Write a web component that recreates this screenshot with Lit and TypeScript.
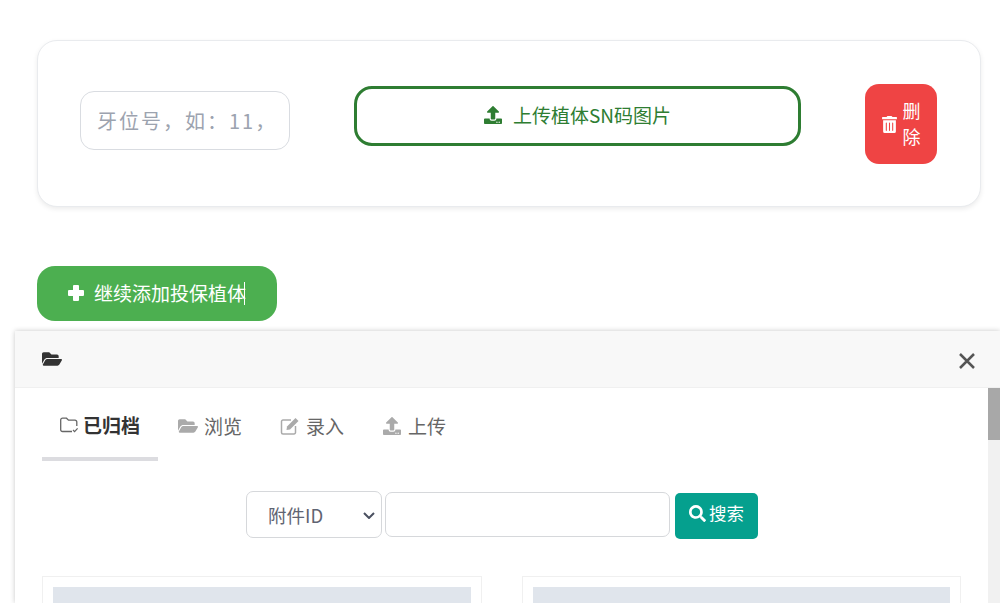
import { LitElement, html, css, svg } from "lit";
import { customElement } from "lit/decorators.js";

const icon = (cls: string, vb: string, d: string) =>
  html`<svg class=${cls} viewBox=${vb} fill="currentColor" aria-hidden="true">${svg`<path d=${d}></path>`}</svg>`;

const UPLOAD = "M296 384h-80c-13.3 0-24-10.7-24-24V192h-87.7c-17.8 0-26.7-21.5-14.1-34.1L242.3 5.7c7.5-7.5 19.8-7.5 27.3 0l152.2 152.2c12.6 12.6 3.7 34.1-14.1 34.1H320v168c0 13.3-10.7 24-24 24zm216-8v112c0 13.3-10.7 24-24 24H24c-13.3 0-24-10.7-24-24V376c0-13.3 10.7-24 24-24h136v8c0 30.9 25.1 56 56 56h80c30.9 0 56-25.1 56-56v-8h136c13.3 0 24 10.7 24 24zm-124 88c0-11-9-20-20-20s-20 9-20 20 9 20 20 20 20-9 20-20zm64 0c0-11-9-20-20-20s-20 9-20 20 9 20 20 20 20-9 20-20z";
const PLUS = "M6 0h4a1 1 0 0 1 1 1v4h4a1 1 0 0 1 1 1v4a1 1 0 0 1-1 1h-4v4a1 1 0 0 1-1 1H6a1 1 0 0 1-1-1v-4H1a1 1 0 0 1-1-1V6a1 1 0 0 1 1-1h4V1a1 1 0 0 1 1-1z";
const TRASH = "M32 464a48 48 0 0 0 48 48h288a48 48 0 0 0 48-48V128H32zm272-256a16 16 0 0 1 32 0v224a16 16 0 0 1-32 0zm-96 0a16 16 0 0 1 32 0v224a16 16 0 0 1-32 0zm-96 0a16 16 0 0 1 32 0v224a16 16 0 0 1-32 0zM432 32H312l-9.4-18.7A24 24 0 0 0 281.1 0H166.8a23.72 23.72 0 0 0-21.4 13.3L136 32H16A16 16 0 0 0 0 48v32a16 16 0 0 0 16 16h416a16 16 0 0 0 16-16V48a16 16 0 0 0-16-16z";
const FOLDER_OPEN = "M572.694 292.093L500.27 416.248A63.997 63.997 0 0 1 444.989 448H45.025c-18.523 0-30.064-20.093-20.731-36.093l72.424-124.155A64 64 0 0 1 152 256h399.964c18.523 0 30.064 20.093 20.73 36.093zM152 224h328v-48c0-26.51-21.49-48-48-48H272l-64-64H48C21.49 64 0 85.49 0 112v278.046l69.077-118.418C86.214 242.25 117.989 224 152 224z";
const SEARCH = "M505 442.7L405.3 343c-4.5-4.5-10.6-7-17-7H372c27.6-35.3 44-79.7 44-128C416 93.1 322.9 0 208 0S0 93.1 0 208s93.1 208 208 208c48.3 0 92.7-16.4 128-44v16.3c0 6.4 2.5 12.5 7 17l99.7 99.7c9.4 9.4 24.6 9.4 33.9 0l28.3-28.3c9.4-9.4 9.4-24.6.1-34zM208 336c-70.7 0-128-57.2-128-128 0-70.7 57.2-128 128-128 70.7 0 128 57.2 128 128 0 70.7-57.2 128-128 128z";

@customElement("app-root")
export class AppRoot extends LitElement {
  static styles = css`
    :host {
      display: block;
      position: relative;
      height: 603px;
      overflow: hidden;
      background: #fff;
      font-family: "Noto Sans CJK SC", "Liberation Sans", sans-serif;
      box-sizing: border-box;
      padding: 40px 19px 0 37px;
    }
    * { box-sizing: border-box; }
    svg { display: block; flex: none; }

    .card {
      height: 167px;
      border: 1px solid #e9ebee;
      border-radius: 20px;
      box-shadow: 0 2px 5px rgba(0, 0, 0, 0.08);
      background: #fff;
      display: flex;
      align-items: flex-start;
      padding: 43px 42px 0 42px;
    }
    .tooth {
      width: 210px;
      height: 59px;
      margin-top: 7px;
      flex: none;
      border: 1px solid #d9dce1;
      border-radius: 14px;
      padding: 0 16px;
      font: 20px "Noto Sans CJK SC", "Liberation Sans", sans-serif;
      letter-spacing: 2px;
      outline: none;
      background: #fff;
    }
    .tooth::placeholder { color: #9ca3af; opacity: 1; }
    .upload {
      width: 447px;
      height: 60px;
      margin: 2px 64px 0 64px;
      flex: none;
      border: 3px solid #2e7d32;
      border-radius: 18px;
      color: #2e7d32;
      display: flex;
      align-items: center;
      justify-content: center;
      gap: 11px;
      font-size: 19px;
      padding-bottom: 3px;
    }
    .upload-ic { width: 18px; height: 18px; margin-top: 1px; }
    .delete {
      width: 72px;
      height: 80px;
      flex: none;
      background: #ef4444;
      border-radius: 14px;
      color: #fff;
      display: flex;
      align-items: center;
      justify-content: center;
      gap: 6px;
      font-size: 18px;
      line-height: 26px;
      padding-bottom: 2px;
    }
    .del-text { width: 18px; text-align: center; }
    .del-ic { width: 15px; height: 17px; margin-top: 2px; }

    .add {
      width: 240px;
      height: 55px;
      margin-top: 59px;
      background: #4caf50;
      border-radius: 18px;
      color: #fff;
      display: flex;
      align-items: center;
      padding: 0 0 2px 31px;
      gap: 10px;
      font-size: 19px;
    }
    .add-ic { width: 16px; height: 16px; }
    .caret { width: 1px; height: 23px; background: #fff; margin: 2px 0 0 -12px; }

    .modal {
      position: absolute;
      left: 15px;
      top: 331px;
      width: 985px;
      height: 272px;
      background: #fff;
      box-shadow: 0 0 5px rgba(0, 0, 0, 0.22);
      display: flex;
      flex-direction: column;
    }
    .head {
      height: 57px;
      flex: none;
      background: #f8f8f8;
      border-bottom: 1px solid #f0f0f0;
      display: flex;
      align-items: center;
      justify-content: space-between;
      padding: 0 24px 0 27px;
      color: #333;
    }
    .head-ic { width: 20px; height: 18px; }
    .close { width: 18px; height: 18px; color: #555; margin-top: 3px; }

    .body { flex: 1; display: flex; min-height: 0; }
    .content { flex: 1; padding: 0 27px; min-width: 0; }
    .bar { width: 12px; background: #f1f1f1; flex: none; }
    .thumb { height: 52px; background: #a8a8a8; }

    .tabs { display: flex; height: 73px; }
    .tab {
      display: flex;
      align-items: center;
      gap: 6px;
      height: 73px;
      padding: 2px 0 0;
      font-size: 19px;
      color: #666;
      margin-right: 38px;
    }
    .tab svg { width: 20px; height: 18px; color: #aaa; }
    .tab.active {
      width: 116px;
      margin-right: 20px;
      padding: 4px 0 0 17px;
      font-weight: 700;
      color: #333;
      border-bottom: 4px solid #dcdce0;
      gap: 4px;
      flex: none;
    }
    .tab.active svg { width: 20px; height: 18px; color: #666; }

    .search {
      display: flex;
      align-items: center;
      margin: 30px 0 0 204px;
      height: 47px;
    }
    .sel {
      width: 136px;
      height: 47px;
      border: 1px solid #d6d8db;
      border-radius: 7px;
      background: #fff url("data:image/svg+xml,%3Csvg xmlns='http://www.w3.org/2000/svg' viewBox='0 0 12 7'%3E%3Cpath d='M1 1l5 5 5-5' fill='none' stroke='%234a5060' stroke-width='2'/%3E%3C/svg%3E") no-repeat right 6px top 20px / 12px 7px;
      appearance: none;
      color: #5f6472;
      font: 18.5px "Noto Sans CJK SC", "Liberation Sans", sans-serif;
      padding-left: 21px;
      outline: none;
    }
    .q {
      width: 285px;
      height: 45px;
      margin-left: 3px;
      border: 1px solid #d6d8db;
      border-radius: 7px;
      background: #fff;
      outline: none;
    }
    .go {
      width: 83px;
      height: 46px;
      margin: 2px 0 0 5px;
      background: #05a08e;
      border-radius: 5px;
      color: #fff;
      display: flex;
      align-items: center;
      justify-content: center;
      gap: 3px;
      font-size: 17.5px;
      padding-bottom: 7px;
    }
    .go svg { width: 17px; height: 17px; margin-top: 3px; }

    .grid {
      display: grid;
      grid-template-columns: 440px 439px;
      gap: 40px;
      margin-top: 38px;
    }
    .tile { border: 1px solid #f0f0f0; height: 80px; padding: 10px; }
    .thumbimg { height: 60px; background: #e0e5ec; }
  `;

  render() {
    return html`
      <div class="card">
        <input class="tooth" placeholder="牙位号，如：11，12" />
        <div class="upload">${icon("upload-ic", "0 0 512 512", UPLOAD)}<span>上传植体SN码图片</span></div>
        <div class="delete">${icon("del-ic", "0 0 448 512", TRASH)}<span class="del-text">删除</span></div>
      </div>
      <div class="add">
        ${icon("add-ic", "0 0 16 16", PLUS)}<span>继续添加投保植体</span><i class="caret"></i>
      </div>
      <section class="modal">
        <div class="head">
          ${icon("head-ic", "0 0 576 512", FOLDER_OPEN)}
          <svg class="close" viewBox="0 0 18 18" fill="none" stroke="currentColor" stroke-width="2.5" aria-label="关闭">
            <path d="M2 2l14 14M16 2L2 16"></path>
          </svg>
        </div>
        <div class="body">
          <div class="content">
            <div class="tabs">
              <div class="tab active">
                <svg viewBox="0 0 20 18" fill="none" stroke="currentColor" stroke-width="1.3">
                  <path d="M13 15.5H3.5A1.8 1.8 0 0 1 1.7 13.7V4A1.8 1.8 0 0 1 3.5 2.2H7.5L9.5 4.2H16A1.8 1.8 0 0 1 17.8 6V10M14 14l1.6 1.6 3-3.2"></path>
                </svg>
                <span>已归档</span>
              </div>
              <div class="tab">${icon("", "0 0 576 512", FOLDER_OPEN)}<span>浏览</span></div>
              <div class="tab">
                <svg viewBox="0 0 20 18" fill="none" stroke="currentColor" stroke-width="1.5">
                  <path d="M11 3H3a1.5 1.5 0 0 0-1.5 1.5v11A1.5 1.5 0 0 0 3 17h11a1.5 1.5 0 0 0 1.5-1.5V9"></path>
                  <path d="M7 9.5L15.5 1l3 3L10 12.5l-3.5.5z" fill="currentColor" stroke="none"></path>
                </svg>
                <span>录入</span>
              </div>
              <div class="tab">${icon("", "0 0 512 512", UPLOAD)}<span>上传</span></div>
            </div>
            <div class="search">
              <select class="sel"><option>附件ID</option></select>
              <input class="q" />
              <div class="go">${icon("", "0 0 512 512", SEARCH)}<span>搜索</span></div>
            </div>
            <div class="grid">
              <div class="tile"><div class="thumbimg"></div></div>
              <div class="tile"><div class="thumbimg"></div></div>
            </div>
          </div>
          <div class="bar"><div class="thumb"></div></div>
        </div>
      </section>
    `;
  }
}
